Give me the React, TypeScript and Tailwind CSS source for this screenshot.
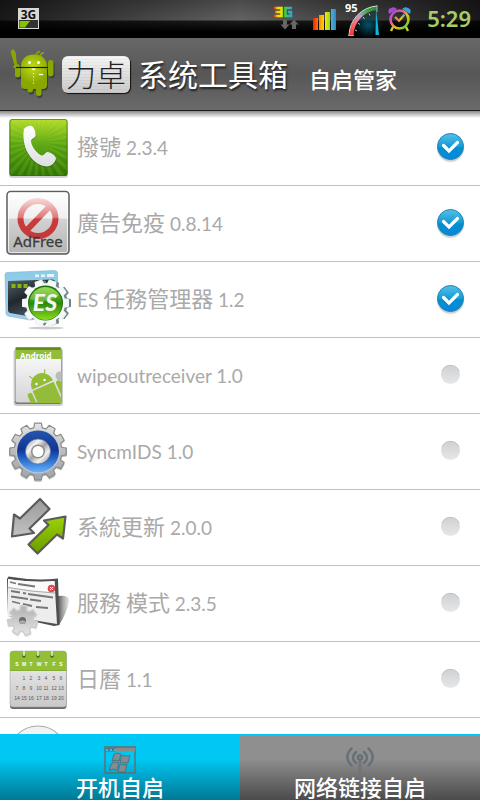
import { useState } from "react";
import type { ReactNode } from "react";

// closed outline of a cog wheel
function gearPath(
  cx: number,
  cy: number,
  outer: number,
  inner: number,
  teeth: number,
  turn = 0
) {
  const step = (Math.PI * 2) / teeth;
  const points: string[] = [];
  for (let i = 0; i < teeth; i++) {
    const a = i * step + turn;
    const corners = [
      [inner, -0.34],
      [outer, -0.23],
      [outer, 0.23],
      [inner, 0.34],
    ];
    corners.forEach(([r, k]) => {
      const x = cx + r * Math.cos(a + k * step);
      const y = cy + r * Math.sin(a + k * step);
      points.push(`${x.toFixed(2)} ${y.toFixed(2)}`);
    });
  }
  return `M${points.join("L")}Z`;
}

function IconFrame({ children }: { children: ReactNode }) {
  return (
    <svg
      viewBox="0 0 72 75"
      className="h-[75px] w-[72px] shrink-0"
      aria-hidden="true"
    >
      {children}
    </svg>
  );
}

function PhoneIcon() {
  const rays = Array.from({ length: 28 }, (_, i) => {
    const a = (i * Math.PI * 2) / 28;
    const b = a + Math.PI / 28;
    return `M38 32L${38 + 60 * Math.cos(a)} ${32 + 60 * Math.sin(a)}L${
      38 + 60 * Math.cos(b)
    } ${32 + 60 * Math.sin(b)}Z`;
  }).join("");

  return (
    <IconFrame>
      <defs>
        <linearGradient id="phoneBg" x1="0" y1="0" x2="0" y2="1">
          <stop offset="0" stopColor="#b3dd2c" />
          <stop offset="0.45" stopColor="#58a313" />
          <stop offset="1" stopColor="#2f7405" />
        </linearGradient>
        <linearGradient id="phoneSet" x1="0" y1="0" x2="0" y2="1">
          <stop offset="0" stopColor="#ffffff" />
          <stop offset="1" stopColor="#dcdfe0" />
        </linearGradient>
        <clipPath id="phoneClip">
          <rect x="10" y="9" width="57" height="57" rx="2" />
        </clipPath>
      </defs>
      <rect x="9" y="10" width="59" height="58" rx="3" fill="#000" opacity="0.18" />
      <rect x="9.5" y="9" width="58" height="57" rx="2.5" fill="url(#phoneBg)" />
      <path d={rays} fill="#c8f04a" opacity="0.14" clipPath="url(#phoneClip)" />
      <rect x="10" y="9.5" width="57" height="56" rx="2" fill="none" stroke="#2f6d08" strokeOpacity="0.6" />
      <path
        d="M24 20C27 17 31 15.5 33.500 18.500C35 21 36 25 35.500 27C34.500 29.500 31.500 29.500 31 32C31.500 38 37 44.500 41.500 46.500C44 47 45 43.500 47.500 43C50.500 43 56 47 56.500 49.500C56 53 52 57.500 46.500 57.500C38 57 30.500 50 26.500 41.500C23.500 34.500 22.500 25.500 24 20Z"
        fill="#1e5204"
        opacity="0.5"
      />
      <path
        d="M24 19C27 16 31 14.500 33.500 17.500C35 20 36 24 35.500 26C34.500 28.500 31.500 28.500 31 31C31.500 37 37 43.500 41.500 45.500C44 46 45 42.500 47.500 42C50.500 42 56 46 56 48.500C55.500 52 52 56.500 46.500 56.500C38 56 30.500 49 26.500 40.500C23.500 33.500 22.500 24.500 24 19Z"
        fill="url(#phoneSet)"
      />
    </IconFrame>
  );
}

function AdFreeIcon() {
  return (
    <IconFrame>
      <defs>
        <linearGradient id="adBg" x1="0" y1="0" x2="0" y2="1">
          <stop offset="0" stopColor="#ffffff" />
          <stop offset="0.42" stopColor="#f0f0f0" />
          <stop offset="0.45" stopColor="#d2d2d2" />
          <stop offset="1" stopColor="#b4b4b4" />
        </linearGradient>
        <linearGradient id="adRed" x1="0" y1="12" x2="0" y2="54" gradientUnits="userSpaceOnUse">
          <stop offset="0" stopColor="#f6dcdb" />
          <stop offset="0.46" stopColor="#dd7b7a" />
          <stop offset="0.5" stopColor="#cb3a3c" />
          <stop offset="1" stopColor="#c2393b" />
        </linearGradient>
      </defs>
      <rect x="7" y="5.5" width="62" height="62.500" rx="3.500" fill="url(#adBg)" stroke="#5e5e5e" strokeWidth="1.500" />
      <rect x="8.500" y="7" width="59" height="59.500" rx="2" fill="none" stroke="#fff" strokeOpacity="0.7" />
      <g fill="none" stroke="url(#adRed)" strokeWidth="6">
        <circle cx="38" cy="32.500" r="17.500" />
        <path d="M26 45L50 20" />
      </g>
      <text
        x="38"
        y="61"
        textAnchor="middle"
        fontFamily="'Noto Sans', sans-serif"
        fontSize="15"
        stroke="#3c3c3c"
        strokeWidth="0.3"
        fill="#3c3c3c"
      >
        AdFree
      </text>
    </IconFrame>
  );
}

function EsIcon() {
  return (
    <IconFrame>
      <defs>
        <linearGradient id="esBlue" x1="0" y1="0" x2="0" y2="1">
          <stop offset="0" stopColor="#8ccbe6" />
          <stop offset="1" stopColor="#a4cdee" />
        </linearGradient>
        <linearGradient id="esDark" x1="0" y1="0" x2="0.6" y2="1">
          <stop offset="0" stopColor="#56646b" />
          <stop offset="0.5" stopColor="#20282c" />
          <stop offset="1" stopColor="#4c5d66" />
        </linearGradient>
        <linearGradient id="esGreen" x1="0" y1="0" x2="0" y2="1">
          <stop offset="0" stopColor="#8ad33c" />
          <stop offset="0.5" stopColor="#2b8a0c" />
          <stop offset="1" stopColor="#8cdc1c" />
        </linearGradient>
      </defs>
      <ellipse cx="46" cy="66" rx="18" ry="1.500" fill="#000" opacity="0.2" />
      <path d="M7 10.500L54 8.500Q57.500 8.500 57.500 11L58 54L30 58L8 54Q6 53.500 6 51L5 12.500Q5 10.500 7 10.500Z" fill="url(#esBlue)" stroke="#79b4d2" strokeWidth="0.6" />
      <path d="M35 12.500h4v2.500h-4zM41 12.500h4v2.500h-4zM47 12h7v3h-7z" fill="#e6f5fb" />
      <path d="M8 19L52 17.500Q55 17.500 55 20L54 50L27 54L10 51Q8 50.500 8 48Z" fill="url(#esDark)" />
      <path d="M11.500 22h4v4h-4zM17.500 22h4v4h-4zM23.500 22h4v4h-4z" fill="#86b60a" />
      <g strokeLinejoin="round">
        <path d={gearPath(48.500, 41, 22, 18.500, 10, 0)} fill="#73838b" stroke="#73838b" strokeWidth="1.500" />
        <path d={gearPath(45.500, 41, 23, 19, 10, 0)} fill="#f5f9fa" stroke="#f0f4f5" strokeWidth="1.500" />
      </g>
      <circle cx="45.500" cy="41" r="17.500" fill="#216f07" />
      <circle cx="45.500" cy="41.500" r="16.500" fill="url(#esGreen)" />
      <path d="M30 37A16 16 0 0 1 59 33Q46 43 30 37Z" fill="#c6efa0" opacity="0.3" />
      <text
        x="45"
        y="49"
        textAnchor="middle"
        fontFamily="Lato, sans-serif"
        fontSize="23"
        fontStyle="italic"
        fontWeight="900"
        fill="#f2f6ee"
      >
        ES
      </text>
    </IconFrame>
  );
}

function AndroidAppIcon() {
  return (
    <IconFrame>
      <defs>
        <linearGradient id="appPaper" x1="0" y1="0" x2="0" y2="1">
          <stop offset="0" stopColor="#ffffff" />
          <stop offset="1" stopColor="#d4d4d4" />
        </linearGradient>
        <clipPath id="appClip">
          <path d="M15.500 9h46v56h-46z" />
        </clipPath>
      </defs>
      <rect x="13.500" y="11" width="49.500" height="57" rx="3" fill="#000" opacity="0.2" />
      <rect x="15" y="9" width="46.500" height="57" rx="2" fill="#777" />
      <rect x="15.500" y="9" width="45.500" height="55.500" rx="2" fill="url(#appPaper)" />
      <path d="M15.500 11Q15.500 9 17.500 9H59Q61 9 61 11V21H15.500Z" fill="#93bd38" />
      <path d="M16 9.500H60.500V12H16Z" fill="#668b21" />
      <g clipPath="url(#appClip)">
        <circle cx="60" cy="38" r="4.500" fill="#bcbcbc" />
        <g fill="#93bd38" transform="rotate(-24 42.500 47)">
          <path d="M31 47A11.500 12 0 0 1 54 47Z" />
          <path d="M31 48.500H54V74H31Z" />
          <rect x="24.500" y="49" width="5" height="19" rx="2.500" />
          <rect x="55.500" y="49" width="5" height="19" rx="2.500" />
          <path d="M36.500 38L34 33.500M48.500 38L51 33.500" stroke="#93bd38" strokeWidth="1.100" />
        </g>
        <circle cx="36.500" cy="46" r="1.200" fill="#fff" />
        <circle cx="44.500" cy="42" r="1.200" fill="#fff" />
      </g>
      <text
        x="20"
        y="21"
        fontFamily="'Noto Sans', sans-serif"
        fontSize="8"
        fontWeight="700"
        fill="#ffffff"
      >
        Android
      </text>
    </IconFrame>
  );
}

function BlueGearIcon() {
  return (
    <IconFrame>
      <defs>
        <linearGradient id="gearMetal" x1="0" y1="0" x2="0" y2="1">
          <stop offset="0" stopColor="#e3e3e3" />
          <stop offset="0.6" stopColor="#b4b4b4" />
          <stop offset="1" stopColor="#a0a6ae" />
        </linearGradient>
        <linearGradient id="gearBlue" x1="0" y1="0" x2="0" y2="1">
          <stop offset="0" stopColor="#2455b0" />
          <stop offset="0.45" stopColor="#123690" />
          <stop offset="0.6" stopColor="#1a55bd" />
          <stop offset="1" stopColor="#68b4f8" />
        </linearGradient>
        <linearGradient id="gearHub" x1="0" y1="0" x2="1" y2="1">
          <stop offset="0" stopColor="#8f8f8f" />
          <stop offset="0.3" stopColor="#f6f6f6" />
          <stop offset="0.5" stopColor="#a0a0a0" />
          <stop offset="0.7" stopColor="#f0f0f0" />
          <stop offset="1" stopColor="#8a8a8a" />
        </linearGradient>
      </defs>
      <g strokeLinejoin="round">
        <path d={gearPath(38, 39, 29, 24, 12, 0)} fill="#000" opacity="0.25" />
        <path d={gearPath(38, 37.500, 28.500, 24, 12, 0)} fill="url(#gearMetal)" stroke="#8c8c8c" strokeWidth="1.200" />
      </g>
      <circle cx="38" cy="37.500" r="22" fill="#c9cdd4" />
      <circle cx="38" cy="37.500" r="21" fill="url(#gearBlue)" />
      <circle cx="38" cy="37.500" r="12.500" fill="url(#gearHub)" stroke="#56709c" strokeWidth="0.7" />
      <circle cx="38" cy="37.500" r="7" fill="#8e8e8e" />
      <circle cx="38" cy="37.500" r="5.500" fill="#fff" />
    </IconFrame>
  );
}

function UpdateIcon() {
  return (
    <IconFrame>
      <defs>
        <linearGradient id="arrowGrey" x1="0" y1="0" x2="0" y2="1">
          <stop offset="0" stopColor="#9a9a9a" />
          <stop offset="1" stopColor="#c2c2c2" />
        </linearGradient>
        <linearGradient id="arrowGreen" x1="0" y1="0" x2="0" y2="1">
          <stop offset="0" stopColor="#9bd400" />
          <stop offset="1" stopColor="#6c9a00" />
        </linearGradient>
      </defs>
      <g stroke="#5b5b5b" strokeWidth="2.200" strokeLinejoin="round">
        <path d="M40 9L49.500 19L29.500 38.500L34 43L12 46.500L14 24.500L20 28.500Z" fill="url(#arrowGrey)" />
        <path d="M65.500 26.500L44 30.500L48.500 35L28.500 54.500L37.500 63.500L57 44.500L63 48.500Z" fill="url(#arrowGreen)" />
      </g>
    </IconFrame>
  );
}

function ServiceIcon() {
  return (
    <IconFrame>
      <defs>
        <linearGradient id="svcShade" x1="0" y1="0" x2="1" y2="0">
          <stop offset="0" stopColor="#555" />
          <stop offset="1" stopColor="#bbb" stopOpacity="0.4" />
        </linearGradient>
        <linearGradient id="svcGear" x1="0" y1="0" x2="0" y2="1">
          <stop offset="0" stopColor="#b0b0b0" />
          <stop offset="1" stopColor="#e6e6e6" />
        </linearGradient>
      </defs>
      <path d="M58 30Q70 29 69 35Q67 47 59 59Z" fill="url(#svcShade)" />
      <path d="M8.500 10.500Q34 15 58 12.500L59.500 59L54 60L8 50L7 13Z" fill="#4f4f4f" />
      <path d="M8 13Q34 17 54.500 15L57 58L8 50Z" fill="#ededed" />
      <path d="M8 13Q34 17 54.500 15L55 26Q33 25 8 21Z" fill="#fafafa" />
      <path d="M8 21.500Q33 26 55 27" stroke="#aaa" fill="none" />
      <path
        d="M10 16L16 17.500M18 18L35 20.500M11 25L20 26.500M23 27L26 27.500M28 28L53 31.500M11 30.500L28 33M30 33.500L41 35M12 35.500L20 37.500M23 38L32 40M36 41L48 42"
        stroke="#777"
        strokeWidth="1.800"
        fill="none"
      />
      <circle cx="51.500" cy="22.500" r="3.800" fill="#dc4b50" />
      <path d="M50 21L53 24M53 21L50 24" stroke="#fff" strokeWidth="1" />
      <g strokeLinejoin="round">
        <path d={gearPath(23, 56, 15.500, 10.500, 7, 0.3)} fill="#000" opacity="0.12" />
        <path d={gearPath(22.500, 54.500, 15, 11, 7, 0.3)} fill="url(#svcGear)" stroke="#cdcdcd" strokeWidth="1.500" />
      </g>
      <circle cx="22.500" cy="54.500" r="3.500" fill="#696969" />
      <ellipse cx="22.500" cy="56" rx="3" ry="1.800" fill="#aaa" />
    </IconFrame>
  );
}

function CalendarIcon() {
  const columns = [17, 24, 31, 39, 46, 54, 61];
  const days = ["S", "M", "T", "W", "T", "F", "S"];
  const weeks = [
    ["", "1", "2", "3", "4", "5", "6"],
    ["7", "8", "9", "10", "11", "12", "13"],
    ["14", "15", "16", "17", "18", "19", "20"],
  ];

  return (
    <IconFrame>
      <defs>
        <linearGradient id="calPaper" x1="0" y1="0" x2="0" y2="1">
          <stop offset="0" stopColor="#f0f0f0" />
          <stop offset="1" stopColor="#c9c9c9" />
        </linearGradient>
      </defs>
      <rect x="10" y="10" width="56.500" height="57" rx="3" fill="#6b6b6b" />
      <rect x="10" y="9" width="56.500" height="56" rx="3" fill="url(#calPaper)" stroke="#999" strokeWidth="0.5" />
      <path d="M10 12Q10 9 13 9H63.500Q66.500 9 66.500 12V28.500H10Z" fill="#93bf35" />
      <path d="M10 28.500H66.500" stroke="#79a125" strokeWidth="0.800" />
      {[24, 38, 52].map((x) => (
        <g key={x}>
          <circle cx={x} cy="14" r="1.800" fill="#4f6620" />
          <path d={`M${x} 8.500V14`} stroke="#dfe6ee" strokeWidth="1.600" />
        </g>
      ))}
      <g fontFamily="'Liberation Sans', sans-serif" fontSize="5" textAnchor="middle">
        {days.map((day, i) => (
          <text key={i} x={columns[i]} y="24" fill="#fff" fontWeight="700">
            {day}
          </text>
        ))}
        {weeks.map((week, row) =>
          week.map((day, i) => (
            <text
              key={`${row}-${i}`}
              x={columns[i]}
              y={38 + row * 10}
              fill="#5a5a5a"
            >
              {day}
            </text>
          ))
        )}
      </g>
    </IconFrame>
  );
}

function RoundIcon() {
  return (
    <IconFrame>
      <circle cx="38" cy="37" r="29" fill="#f2f2f2" stroke="#a9a9a9" strokeWidth="1.200" />
    </IconFrame>
  );
}

const CJK_RUN = /([\u4e00-\u9fff]+)/;

// Han characters are set larger than the latin text around them
function MixedText({ text }: { text: string }) {
  return (
    <>
      {text.split(CJK_RUN).map((part, i) =>
        CJK_RUN.test(part) ? (
          <span key={i} className="text-[22px]">
            {part}
          </span>
        ) : (
          part
        )
      )}
    </>
  );
}

interface AppItem {
  id: string;
  label: string;
  icon: ReactNode;
  enabled: boolean;
}

const APPS: AppItem[] = [
  { id: "dialer", label: "撥號 2.3.4", icon: <PhoneIcon />, enabled: true },
  { id: "adfree", label: "廣告免疫 0.8.14", icon: <AdFreeIcon />, enabled: true },
  { id: "es", label: "ES 任務管理器 1.2", icon: <EsIcon />, enabled: true },
  { id: "wipe", label: "wipeoutreceiver 1.0", icon: <AndroidAppIcon />, enabled: false },
  { id: "sync", label: "SyncmIDS 1.0", icon: <BlueGearIcon />, enabled: false },
  { id: "update", label: "系統更新 2.0.0", icon: <UpdateIcon />, enabled: false },
  { id: "service", label: "服務 模式 2.3.5", icon: <ServiceIcon />, enabled: false },
  { id: "calendar", label: "日曆 1.1", icon: <CalendarIcon />, enabled: false },
];

function CheckMark({ checked }: { checked: boolean }) {
  return (
    <svg
      viewBox="0 0 32 32"
      className="pointer-events-none col-start-1 row-start-1 size-8"
      aria-hidden="true"
    >
      <defs>
        <linearGradient id="checkOn" x1="0" y1="0" x2="0" y2="1">
          <stop offset="0" stopColor="#56c0ea" />
          <stop offset="0.5" stopColor="#149bd6" />
          <stop offset="0.55" stopColor="#028fd0" />
          <stop offset="1" stopColor="#0a86dc" />
        </linearGradient>
        <linearGradient id="checkOff" x1="0" y1="0" x2="0" y2="1">
          <stop offset="0" stopColor="#cfd0d1" />
          <stop offset="1" stopColor="#e6e7e8" />
        </linearGradient>
      </defs>
      {checked ? (
        <>
          <circle cx="15.500" cy="17" r="13.500" fill="#000" opacity="0.08" />
          <circle cx="15.500" cy="16" r="13.500" fill="#000" opacity="0.12" />
          <circle cx="15.500" cy="14.500" r="13" fill="url(#checkOn)" stroke="#1b86b4" />
          <path
            d="M8.500 13.500L14 19L22.500 10.500"
            fill="none"
            stroke="#fff"
            strokeWidth="3.200"
            strokeLinecap="round"
          />
        </>
      ) : (
        <>
          <circle cx="15.500" cy="14.500" r="9.500" fill="url(#checkOff)" />
          <path d="M7 11A9.200 9.200 0 0 1 24 11" fill="none" stroke="#bdbdbd" strokeWidth="0.800" />
        </>
      )}
    </svg>
  );
}

function AppRow({ item }: { item: AppItem }) {
  const [checked, setChecked] = useState(item.enabled);

  return (
    <li className="flex h-[76px] shrink-0 items-center border-b border-[#c2c2c2] pr-[13px]">
      {item.icon}
      <label
        htmlFor={item.id}
        className="ml-[5px] flex-1 text-[19px] leading-8 text-[#a9a9a9]"
      >
        <MixedText text={item.label} />
      </label>
      <span className="grid size-8 place-items-center">
        <input
          id={item.id}
          type="checkbox"
          checked={checked}
          onChange={() => setChecked(!checked)}
          className="col-start-1 row-start-1 size-7 cursor-pointer appearance-none rounded-full"
        />
        <CheckMark checked={checked} />
      </span>
    </li>
  );
}

function StatusBar() {
  return (
    <div className="flex h-[38px] shrink-0 items-start bg-black bg-[linear-gradient(to_right,rgba(0,0,0,0.75),rgba(0,0,0,0)_50%,rgba(0,0,0,0.75)),linear-gradient(to_bottom,#4a4a4a,#636363_20px,#1c1c1c_21px,#000_32px)] pr-[9px] pl-[17px]">
      <svg viewBox="0 0 24 38" className="h-[38px] w-6" aria-hidden="true">
        <rect x="1" y="8" width="21" height="21" fill="#d8d8d8" />
        <rect x="2" y="20" width="19" height="8" fill="#333" />
        <path d="M2.500 21H13L8 27.500H2.500Z" fill="#86c400" />
        <text x="11.500" y="18.500" textAnchor="middle" fontFamily="'Noto Sans', sans-serif" fontSize="12" fontWeight="700" fill="#111">
          3G
        </text>
      </svg>

      {/* SIGNALS */}
      <div className="ml-auto flex">
        <svg viewBox="0 0 28 38" className="h-[38px] w-7" aria-hidden="true">
          <defs>
            <linearGradient id="net3" x1="0" y1="0" x2="1" y2="0">
              <stop offset="0" stopColor="#e23a00" />
              <stop offset="0.5" stopColor="#ffd400" />
              <stop offset="1" stopColor="#d8e800" />
            </linearGradient>
            <linearGradient id="netG" x1="0" y1="0" x2="1" y2="0">
              <stop offset="0" stopColor="#3fd03a" />
              <stop offset="1" stopColor="#2a9bff" />
            </linearGradient>
          </defs>
          <path d="M0 8H7.500V16H0M1 12H7" fill="none" stroke="url(#net3)" strokeWidth="2.600" />
          <path d="M18 8H11.500V16H17V12H14" fill="none" stroke="url(#netG)" strokeWidth="2.600" />
          <path d="M9 20H13V24.500H15.500L11 29.500L6.500 24.500H9ZM18 29H22V24.500H24.500L20 19.500L15.500 24.500H18Z" fill="#666" />
        </svg>
        <svg viewBox="0 0 24 38" className="ml-[11px] h-[38px] w-6" aria-hidden="true">
          <defs>
            <linearGradient id="bars" x1="0" y1="0" x2="24" y2="0" gradientUnits="userSpaceOnUse">
              <stop offset="0" stopColor="#ff1a00" />
              <stop offset="0.25" stopColor="#ff8a00" />
              <stop offset="0.5" stopColor="#ffe600" />
              <stop offset="0.72" stopColor="#7be02a" />
              <stop offset="0.76" stopColor="#48b4c8" />
              <stop offset="1" stopColor="#2c78d0" />
            </linearGradient>
          </defs>
          <path d="M0 18H5V30H0ZM6 15H11V30H6ZM12 12H17V30H12ZM18 9H23V30H18Z" fill="url(#bars)" />
        </svg>
        <svg viewBox="0 0 38 38" className="ml-2 h-[38px] w-[38px]" aria-hidden="true">
          <defs>
            <linearGradient id="dial" x1="4" y1="36" x2="34" y2="6" gradientUnits="userSpaceOnUse">
              <stop offset="0" stopColor="#ff2a2a" />
              <stop offset="0.3" stopColor="#ff6a6a" />
              <stop offset="0.5" stopColor="#c79bd0" />
              <stop offset="0.7" stopColor="#3db04a" />
              <stop offset="1" stopColor="#1d7a2a" />
            </linearGradient>
            <radialGradient id="glow">
              <stop offset="0" stopColor="#00566c" />
              <stop offset="1" stopColor="#003040" stopOpacity="0" />
            </radialGradient>
          </defs>
          <circle cx="23" cy="25" r="15" fill="url(#glow)" />
          <path d="M6.500 35.500A28 28 0 0 1 32 8" fill="none" stroke="url(#dial)" strokeWidth="4" />
          <path d="M4 35.500A30 30 0 0 1 32 6" fill="none" stroke="#d7dde0" strokeWidth="1" />
          <path d="M10 30L12 31M13 23L15 24.500M18 17L19.500 19M24 13.500L25 15.500" stroke="#bfc7cc" />
          <path d="M31 8L34 35H30.500Z" fill="#14b4dc" />
          <path d="M3 35.500H9M32 5V12" stroke="#aaa" />
          <text x="0" y="12" fontFamily="'Noto Sans', sans-serif" fontSize="11" fontWeight="700" fill="#fff">
            95
          </text>
        </svg>
        <svg viewBox="0 0 24 38" className="ml-[5px] h-[38px] w-6" aria-hidden="true">
          <defs>
            <linearGradient id="alarm" x1="0" y1="1" x2="1" y2="0">
              <stop offset="0" stopColor="#f04878" />
              <stop offset="0.5" stopColor="#f4d000" />
              <stop offset="1" stopColor="#38b4e0" />
            </linearGradient>
            <linearGradient id="alarmRing" x1="0" y1="0" x2="1" y2="1">
              <stop offset="0" stopColor="#9a4be0" />
              <stop offset="0.35" stopColor="#e85a9a" />
              <stop offset="0.6" stopColor="#f4c400" />
              <stop offset="1" stopColor="#3cd050" />
            </linearGradient>
          </defs>
          <path d="M1 14Q-1 9 3 8Q6 6 9 9Z" fill="#a44fd8" />
          <path d="M14 9Q17 6 20 8Q24 9 22 14Z" fill="#3e9ede" />
          <circle cx="11.500" cy="19.500" r="9" fill="none" stroke="url(#alarmRing)" strokeWidth="2.600" />
          <path d="M5 27L3 31M18 27L20 31" stroke="#c8d020" strokeWidth="2.400" />
          <path d="M7 17L11 21L16.500 14.500" fill="none" stroke="url(#alarm)" strokeWidth="2.200" />
        </svg>
        <time className="ml-[15px] font-['Noto_Sans',sans-serif] text-[22px] leading-[36px] font-semibold text-[#a5cf63]">
          5:29
        </time>
      </div>
    </div>
  );
}

function WarriorRobot() {
  return (
    <svg viewBox="0 0 50 54" className="h-[54px] w-[50px] shrink-0" aria-hidden="true">
      <defs>
        <radialGradient id="robotSkin" cx="24" cy="20" r="16" gradientUnits="userSpaceOnUse">
          <stop offset="0" stopColor="#c2dc1c" />
          <stop offset="1" stopColor="#88a800" />
        </radialGradient>
      </defs>
      <g fill="#000" opacity="0.35" transform="translate(1 1.500)">
        <path d="M12 21H38V38Q38 42 34 42H16Q12 42 12 38Z" />
        <rect x="6" y="21" width="5.500" height="10" rx="2.700" />
        <rect x="39" y="13" width="5.500" height="16.500" rx="2.700" />
        <rect x="18.500" y="38" width="5.500" height="8" rx="2.700" />
        <rect x="27" y="38" width="5.500" height="11.500" rx="2.700" />
      </g>
      <g fill="url(#robotSkin)">
        <path d="M1.500 4.500L4 2L6.500 5L8 17L10.500 18L10 19.500L4.500 21L4 19.500L5.500 18Z" />
        <rect x="6" y="19" width="5.500" height="11.500" rx="2.700" />
        <rect x="39" y="13" width="5.500" height="16.500" rx="2.700" />
        <path d="M12 20Q12.500 7.500 25 7.500T38 20Z" />
        <path d="M12 21H38V38Q38 42 34 42H16Q12 42 12 38Z" />
        <rect x="18.500" y="37" width="5.500" height="8.500" rx="2.700" />
        <rect x="27" y="37" width="5.500" height="12" rx="2.700" />
      </g>
      <path d="M27 8Q28 5 31 4.500M31 9Q32 6 35 5.500" fill="none" stroke="#8aa800" strokeWidth="1.500" />
      <path d="M7 20.500H39" stroke="#1b2400" strokeWidth="1.200" />
      <circle cx="20.500" cy="15.500" r="1.500" fill="#fff" />
      <circle cx="29.500" cy="15.500" r="1.500" fill="#fff" />
      <path d="M22 21.500H27L24.500 23.500Z" fill="#fff" />
      <path d="M24.500 26V37" stroke="#eef3c0" strokeWidth="1.200" strokeDasharray="1.200 2" />
      <path d="M30 27.500H34" stroke="#fff" strokeWidth="1.200" />
    </svg>
  );
}

function Header() {
  return (
    <header className="relative flex h-[72px] shrink-0 items-center bg-linear-to-b from-[#686868] via-[#575757] to-[#6a6a6a] pl-[9px] text-white">
      <WarriorRobot />
      <span className="ml-[3px] flex h-[37px] items-center rounded-md bg-[repeating-linear-gradient(to_bottom,rgba(0,0,0,0.04)_0,rgba(0,0,0,0.04)_1px,transparent_1px,transparent_3px),linear-gradient(to_bottom,#f6f6f6,#cacaca)] px-1 text-[30px] leading-8 font-light text-[#222] shadow-[1px_1px_1px_#111]">
        力卓
      </span>
      <h1 className="ml-2 text-[30px] leading-10 font-normal [text-shadow:1px_2px_2px_#222]">
        系统工具箱
      </h1>
      <h2 className="mt-3 ml-[21px] text-[22px] leading-8 font-medium">
        自启管家
      </h2>
      {/* edge and shadow falling on the list */}
      <div className="absolute inset-x-0 top-full z-10 h-2 border-t border-[#1c1a1c] bg-linear-to-b from-[#8a8a8a] to-transparent" />
    </header>
  );
}

function BootIcon() {
  return (
    <svg viewBox="0 0 32 28" className="h-7 w-8" aria-hidden="true">
      <path d="M1 1H31V27H1Z" fill="none" stroke="#5f6f76" strokeWidth="1.400" />
      <path d="M12 2H31V5.500H12Z" fill="#8b8b8b" />
      <path d="M2 2H12V5.500H2Z" fill="#4d7886" />
      <path d="M2 3H4V5H2ZM6 3H8V5H6ZM10 3H12V5H10Z" fill="#21c8ee" />
      <g fill="#858b8e" stroke="#4d6a74" strokeWidth="0.800">
        <path d="M10 8Q13 6 17 8L15 15Q12 13.500 8 15Z" />
        <path d="M18 9Q22 11 26 9.500L24 16.500Q20 18 16 16Z" />
        <path d="M8 17Q11 15 15 17L13 24Q10 22.500 5 24Z" />
        <path d="M16 18Q19 20 23 18.500L21 26H14Z" />
      </g>
    </svg>
  );
}

function AntennaIcon() {
  return (
    <svg viewBox="0 0 32 28" className="h-7 w-8" aria-hidden="true">
      <g fill="none" stroke="#667075" strokeWidth="2.400" strokeLinecap="round">
        <path d="M7.500 2.500Q-1 11 7.500 19.500M24.500 2.500Q33 11 24.500 19.500" />
        <path d="M12 6Q6 11.500 12 17M20 6Q26 11.500 20 17" />
      </g>
      <circle cx="16" cy="11.500" r="2.800" fill="#76797b" stroke="#56646b" />
      <path d="M15 15H17V26H15Z" fill="#7c7c7c" stroke="#667075" strokeWidth="0.800" />
    </svg>
  );
}

const TABS = [
  { id: "boot", label: "开机自启", icon: <BootIcon /> },
  { id: "network", label: "网络链接自启", icon: <AntennaIcon /> },
];

export default function App() {
  const [tab, setTab] = useState("boot");

  return (
    <div className="flex h-screen flex-col overflow-hidden bg-white font-[Lato,'Noto_Sans_CJK_SC',sans-serif]">
      <StatusBar />
      <Header />

      {/* APPS */}
      <ul className="flex min-h-0 flex-1 flex-col overflow-y-auto [scrollbar-width:none]">
        {APPS.map((item) => (
          <AppRow key={item.id} item={item} />
        ))}
        <li className="h-[76px] shrink-0">
          <RoundIcon />
        </li>
      </ul>

      {/* TABS */}
      <nav className="grid h-[66px] shrink-0 grid-cols-2 border-t-2 border-[#00c8f4]">
        {TABS.map((t) => (
          <button
            key={t.id}
            type="button"
            aria-pressed={tab === t.id}
            onClick={() => setTab(t.id)}
            className={`flex flex-col items-center pt-[10px] text-[22px] leading-7 font-medium text-white ${
              tab === t.id
                ? "bg-linear-to-b from-[#00c8f4] from-35% to-[#00758f]"
                : "bg-linear-to-b from-[#8f8f8f] from-35% to-[#484848]"
            }`}
          >
            {t.icon}
            {t.label}
          </button>
        ))}
      </nav>
    </div>
  );
}
